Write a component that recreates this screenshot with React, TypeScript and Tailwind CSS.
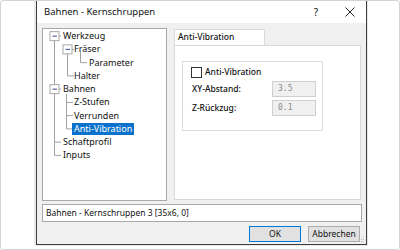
import React from "react"

const font = { fontFamily: '"Noto Sans", "Open Sans", Arial, sans-serif' }

type Node = { label: string; depth: number; selected?: boolean }

const nodes: Node[] = [
    { label: "Werkzeug", depth: 0 },
    { label: "Fräser", depth: 1 },
    { label: "Parameter", depth: 2 },
    { label: "Halter", depth: 1 },
    { label: "Bahnen", depth: 0 },
    { label: "Z-Stufen", depth: 1 },
    { label: "Verrunden", depth: 1 },
    { label: "Anti-Vibration", depth: 1, selected: true },
    { label: "Schaftprofil", depth: 0 },
    { label: "Inputs", depth: 0 },
]

const ROW = 13.25
const TOP = 0.5
const cy = (i: number) => TOP + ROW * i + ROW / 2

// expander box drawn at x, row i
const Expander = ({ x, i }: { x: number; i: number }) => {
    const y = cy(i)
    return (
        <g>
            <rect x={x - 4.5} y={y - 4.5} width={9} height={9} fill="#fff" stroke="#a8a8a8" strokeWidth={1} />
            <line x1={x - 2} y1={y} x2={x + 2.5} y2={y} stroke="#3a4a8a" strokeWidth={1} />
        </g>
    )
}

const TreeLines = () => {
    const c = "#a0a0a0"
    const l = (x1: number, y1: number, x2: number, y2: number, k: string) => (
        <line key={k} x1={x1} y1={y1} x2={x2} y2={y2} stroke={c} strokeWidth={1} />
    )
    return (
        <svg className="absolute left-0 top-0" width={124} height={172}>
            {/* root column */}
            {l(11.5, cy(0) + 4.5, 11.5, cy(4) - 4.5, "r1")}
            {l(11.5, cy(4) + 4.5, 11.5, cy(9), "r2")}
            {l(16, cy(0), 18, cy(0), "h0")}
            {l(16, cy(4), 18, cy(4), "h4")}
            {l(11.5, cy(8), 18, cy(8), "h8")}
            {l(11.5, cy(9), 18, cy(9), "h9")}
            {/* Werkzeug children */}
            {l(24.5, cy(1) + 4.5, 24.5, cy(3), "w1")}
            {l(24.5, cy(3), 31, cy(3), "w3")}
            {l(29, cy(1), 31, cy(1), "w1h")}
            {/* Fräser children */}
            {l(37.5, cy(1) + 2, 37.5, cy(2), "f1")}
            {l(37.5, cy(2), 44, cy(2), "f2")}
            {/* Bahnen children */}
            {l(23.5, cy(4) + 5, 23.5, cy(7), "b1")}
            {l(23.5, cy(5), 30, cy(5), "b5")}
            {l(23.5, cy(6), 30, cy(6), "b6")}
            {l(23.5, cy(7), 30, cy(7), "b7")}
            <Expander x={11.5} i={0} />
            <Expander x={24.5} i={1} />
            <Expander x={11.5} i={4} />
        </svg>
    )
}

const Tree = () => {
    const indent = [18, 29, 44]
    return (
        <div className="relative w-[125px] h-[173px] bg-white border border-[#a9a9a9] pt-[0.5px]">
            <TreeLines />
            <div className="relative flex flex-col">
                {nodes.map((n) => (
                    <div key={n.label} className="flex items-center h-[13.25px]" style={{ paddingLeft: indent[n.depth] }}>
                        <span
                            className={`px-[2px] leading-[12px] text-[9px] ${n.selected ? "bg-[#0a72cc] text-white" : "text-[#111]"}`}
                        >
                            {n.label}
                        </span>
                    </div>
                ))}
            </div>
        </div>
    )
}

const Field = ({ label, value }: { label: string; value: string }) => (
    <div className="flex items-center justify-between h-[16px]">
        <span className="text-[8.5px] text-[#111] font-medium">{label}</span>
        <div className="w-[44px] h-[16px] bg-[#f0f0f0] border border-[#cfcfcf] flex items-center pl-[5px] text-[8px] text-[#8a8a8a] font-[monospace]">
            {value}
        </div>
    </div>
)

const TabPanel = () => (
    <div className="flex flex-col w-[187px] h-[171px] mt-[1px]">
        <div className="flex">
            <div className="w-[91px] h-[16px] bg-white border border-b-0 border-[#d9d9d9] text-[8.5px] flex items-center pl-[3px] text-[#111] font-medium">
                Anti-Vibration
            </div>
        </div>
        <div className="flex-1 bg-white border border-[#d9d9d9] pt-[15px] pl-[7px]">
            <div className="w-[141px] h-[70px] border border-[#dcdcdc] pt-[4px] pl-[8px] pr-[6px] flex flex-col gap-[3px]">
                <div className="flex items-center gap-[3px] h-[12px]">
                    <div className="w-[11px] h-[11px] border border-[#333] bg-white" />
                    <span className="text-[8.5px] text-[#111] font-medium">Anti-Vibration</span>
                </div>
                <div className="flex flex-col gap-[3px] pl-[1px]">
                    <Field label="XY-Abstand:" value="3.5" />
                    <Field label="Z-Rückzug:" value="0.1" />
                </div>
            </div>
        </div>
    </div>
)

const Grip = () => (
    <svg width="6" height="6" viewBox="0 0 6 6" className="absolute right-[1px] bottom-[1px]">
        <rect x="4" y="0" width="1" height="1" fill="#b8b8b8" />
        <rect x="2" y="2" width="1" height="1" fill="#b8b8b8" />
        <rect x="4" y="2" width="1" height="1" fill="#b8b8b8" />
        <rect x="0" y="4" width="1" height="1" fill="#b8b8b8" />
        <rect x="2" y="4" width="1" height="1" fill="#b8b8b8" />
        <rect x="4" y="4" width="1" height="1" fill="#b8b8b8" />
    </svg>
)

export default function App() {
    return (
        <div className="w-[400px] h-[250px] bg-white border border-[#d4d4d4] rounded-[3px] overflow-hidden" style={font}>
            <div className="ml-[33px] w-[334px] h-[245px] pl-[2px] bg-[#e9e9e9]">
                <div className="relative w-[331px] h-[244px] border-x border-b border-[#3c3c3c] bg-[#f0f0f0] flex flex-col">
                    <div className="h-[22px] bg-white flex items-center pl-[7px] text-[9.5px] text-[#111]">
                        <span className="flex-1">Bahnen - Kernschruppen</span>
                        <span className="w-[36px] text-center text-[10px]">?</span>
                        <span className="w-[32px] flex justify-center">
                            <svg width="10" height="10" viewBox="0 0 10 10">
                                <path d="M0.5 0.5 L9.5 9.5 M9.5 0.5 L0.5 9.5" stroke="#222" strokeWidth="1" />
                            </svg>
                        </span>
                    </div>
                    <div className="flex gap-[7px] pl-[5px] pt-[5px]">
                        <Tree />
                        <TabPanel />
                    </div>
                    <div className="ml-[5px] mt-[3px] w-[320px] h-[18px] bg-white border border-[#a9a9a9] flex items-center pl-[3px] text-[8.5px] text-[#111]">
                        Bahnen - Kernschruppen 3 [35x6, 0]
                    </div>
                    <div className="flex justify-end gap-[7px] pr-[6px] mt-[4px]">
                        <button className="w-[52px] h-[16px] bg-[#e1e1e1] border border-[#0078d7] text-[8.5px] text-[#111]">OK</button>
                        <button className="w-[52px] h-[16px] bg-[#e1e1e1] border border-[#adadad] text-[8.5px] text-[#111]">Abbrechen</button>
                    </div>
                    <Grip />
                </div>
            </div>
        </div>
    )
}
